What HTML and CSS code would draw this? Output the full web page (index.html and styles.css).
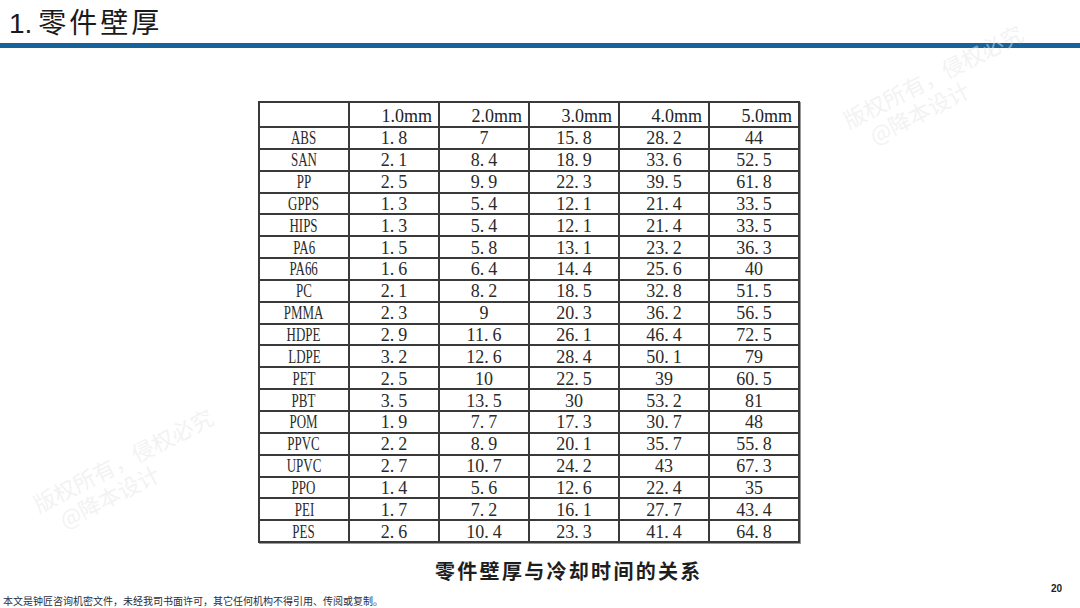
FILE: index.html
```html
<!DOCTYPE html>
<html lang="zh-CN">
<head>
<meta charset="utf-8">
<title>零件壁厚</title>
<link rel="stylesheet" href="styles.css">
</head>
<body>
<div class="slide">
  <header class="header">
    <h1 class="title"><span class="num">1.</span>零件壁厚</h1>
  </header>
  <div class="rule"></div>
  <main class="main">
    <table class="grid">
      <colgroup><col><col><col><col><col><col></colgroup>
      <thead>
        <tr><th></th><th>1.0mm</th><th>2.0mm</th><th>3.0mm</th><th>4.0mm</th><th>5.0mm</th></tr>
      </thead>
      <tbody>
        <tr><td><span class="nm">ABS</span></td><td>1<span class="d">.</span>8</td><td>7</td><td>15<span class="d">.</span>8</td><td>28<span class="d">.</span>2</td><td>44</td></tr>
        <tr><td><span class="nm">SAN</span></td><td>2<span class="d">.</span>1</td><td>8<span class="d">.</span>4</td><td>18<span class="d">.</span>9</td><td>33<span class="d">.</span>6</td><td>52<span class="d">.</span>5</td></tr>
        <tr><td><span class="nm">PP</span></td><td>2<span class="d">.</span>5</td><td>9<span class="d">.</span>9</td><td>22<span class="d">.</span>3</td><td>39<span class="d">.</span>5</td><td>61<span class="d">.</span>8</td></tr>
        <tr><td><span class="nm">GPPS</span></td><td>1<span class="d">.</span>3</td><td>5<span class="d">.</span>4</td><td>12<span class="d">.</span>1</td><td>21<span class="d">.</span>4</td><td>33<span class="d">.</span>5</td></tr>
        <tr><td><span class="nm">HIPS</span></td><td>1<span class="d">.</span>3</td><td>5<span class="d">.</span>4</td><td>12<span class="d">.</span>1</td><td>21<span class="d">.</span>4</td><td>33<span class="d">.</span>5</td></tr>
        <tr><td><span class="nm">PA6</span></td><td>1<span class="d">.</span>5</td><td>5<span class="d">.</span>8</td><td>13<span class="d">.</span>1</td><td>23<span class="d">.</span>2</td><td>36<span class="d">.</span>3</td></tr>
        <tr><td><span class="nm">PA66</span></td><td>1<span class="d">.</span>6</td><td>6<span class="d">.</span>4</td><td>14<span class="d">.</span>4</td><td>25<span class="d">.</span>6</td><td>40</td></tr>
        <tr><td><span class="nm">PC</span></td><td>2<span class="d">.</span>1</td><td>8<span class="d">.</span>2</td><td>18<span class="d">.</span>5</td><td>32<span class="d">.</span>8</td><td>51<span class="d">.</span>5</td></tr>
        <tr><td><span class="nm">PMMA</span></td><td>2<span class="d">.</span>3</td><td>9</td><td>20<span class="d">.</span>3</td><td>36<span class="d">.</span>2</td><td>56<span class="d">.</span>5</td></tr>
        <tr><td><span class="nm">HDPE</span></td><td>2<span class="d">.</span>9</td><td>11<span class="d">.</span>6</td><td>26<span class="d">.</span>1</td><td>46<span class="d">.</span>4</td><td>72<span class="d">.</span>5</td></tr>
        <tr><td><span class="nm">LDPE</span></td><td>3<span class="d">.</span>2</td><td>12<span class="d">.</span>6</td><td>28<span class="d">.</span>4</td><td>50<span class="d">.</span>1</td><td>79</td></tr>
        <tr><td><span class="nm">PET</span></td><td>2<span class="d">.</span>5</td><td>10</td><td>22<span class="d">.</span>5</td><td>39</td><td>60<span class="d">.</span>5</td></tr>
        <tr><td><span class="nm">PBT</span></td><td>3<span class="d">.</span>5</td><td>13<span class="d">.</span>5</td><td>30</td><td>53<span class="d">.</span>2</td><td>81</td></tr>
        <tr><td><span class="nm">POM</span></td><td>1<span class="d">.</span>9</td><td>7<span class="d">.</span>7</td><td>17<span class="d">.</span>3</td><td>30<span class="d">.</span>7</td><td>48</td></tr>
        <tr><td><span class="nm">PPVC</span></td><td>2<span class="d">.</span>2</td><td>8<span class="d">.</span>9</td><td>20<span class="d">.</span>1</td><td>35<span class="d">.</span>7</td><td>55<span class="d">.</span>8</td></tr>
        <tr><td><span class="nm">UPVC</span></td><td>2<span class="d">.</span>7</td><td>10<span class="d">.</span>7</td><td>24<span class="d">.</span>2</td><td>43</td><td>67<span class="d">.</span>3</td></tr>
        <tr><td><span class="nm">PPO</span></td><td>1<span class="d">.</span>4</td><td>5<span class="d">.</span>6</td><td>12<span class="d">.</span>6</td><td>22<span class="d">.</span>4</td><td>35</td></tr>
        <tr><td><span class="nm">PEI</span></td><td>1<span class="d">.</span>7</td><td>7<span class="d">.</span>2</td><td>16<span class="d">.</span>1</td><td>27<span class="d">.</span>7</td><td>43<span class="d">.</span>4</td></tr>
        <tr><td><span class="nm">PES</span></td><td>2<span class="d">.</span>6</td><td>10<span class="d">.</span>4</td><td>23<span class="d">.</span>3</td><td>41<span class="d">.</span>4</td><td>64<span class="d">.</span>8</td></tr>
      </tbody>
    </table>
    <p class="caption">零件壁厚与冷却时间的关系</p>
  </main>
  <div class="bottom">
    <div class="pagenum">20</div>
    <footer class="footer">本文是钟匠咨询机密文件，未经我司书面许可，其它任何机构不得引用、传阅或复制。</footer>
  </div>

  <div class="watermark wm-top">
    <div class="wm-line">版权所有，侵权必究</div>
    <div class="wm-line wm-sub">@降本设计</div>
  </div>
  <div class="watermark wm-bottom">
    <div class="wm-line">版权所有，侵权必究</div>
    <div class="wm-line wm-sub">@降本设计</div>
  </div>
</div>
</body>
</html>
```
FILE: styles.css
```css
* { box-sizing: border-box; }

html, body {
  margin: 0;
  padding: 0;
  background: #ffffff;
}

.slide {
  position: relative;
  width: 1080px;
  height: 608px;
  overflow: hidden;
  background: #ffffff;
  font-family: "Liberation Sans", "Noto Sans CJK SC", sans-serif;
  color: #111;
  display: flex;
  flex-direction: column;
}

.header {
  height: 43px;
  flex: none;
  display: flex;
  align-items: flex-end;
  padding-left: 9px;
}

.title {
  margin: 0;
  font-family: "Noto Sans CJK SC", sans-serif;
  font-weight: 400;
  font-size: 28px;
  line-height: 38px;
  letter-spacing: 3px;
  color: #1a1a1a;
}

.title .num {
  font-family: "Liberation Sans", sans-serif;
  font-size: 28px;
  letter-spacing: 0;
  margin-right: 6px;
}

.rule {
  height: 5px;
  flex: none;
  background: #15639a;
}

.main {
  flex: none;
  padding-top: 53px;
  padding-left: 258px;
}

.grid {
  border-collapse: collapse;
  table-layout: fixed;
  width: 540px;
  font-family: "Liberation Serif", "Noto Sans CJK SC", serif;
  font-size: 18px;
  color: #2a2a2a;
  box-shadow: 1px 1px 0 #9a9a9a;
}

.grid col { width: 90px; }

.grid th,
.grid td {
  border: 2px solid #3a3a3a;
  padding: 0;
  line-height: 17px;
  white-space: nowrap;
}

.grid th {
  height: 25px;
  font-weight: 400;
  text-align: right;
  padding-right: 6px;
  padding-top: 4px;
  color: #222;
}

.grid td {
  height: 21.85px;
  text-align: center;
  padding-top: 2px;
}

.grid .nm {
  display: inline-block;
  transform: scale(0.72, 1.04);
  transform-origin: center;
}

.grid .d {
  margin-right: 4px;
}

.caption {
  margin: 15px 0 0 177px;
  height: 25px;
  font-family: "Noto Sans CJK SC", serif;
  font-weight: 700;
  font-size: 20px;
  line-height: 25px;
  letter-spacing: 2.3px;
  color: #1e1e1e;
}

.bottom {
  margin-top: auto;
  flex: none;
  padding-bottom: 3px;
}

.pagenum {
  height: 12px;
  text-align: right;
  padding-right: 18px;
  font-family: "Liberation Sans", sans-serif;
  font-weight: 700;
  font-size: 10px;
  line-height: 12px;
  color: #222;
}

.footer {
  padding-left: 3px;
  font-family: "Noto Sans CJK SC", sans-serif;
  font-size: 10px;
  line-height: 11px;
  color: #2c2c3a;
}

.watermark {
  position: absolute;
  transform: rotate(-27deg);
  transform-origin: left bottom;
  font-family: "Noto Sans CJK SC", sans-serif;
  font-size: 22px;
  line-height: 26px;
  color: rgba(230, 230, 230, 0.5);
  pointer-events: none;
  white-space: nowrap;
}

.wm-sub {
  padding-left: 16px;
  font-size: 22px;
}

.wm-top {
  left: 862px;
  top: 103px;
}

.wm-bottom {
  left: 52px;
  top: 487px;
}
```
